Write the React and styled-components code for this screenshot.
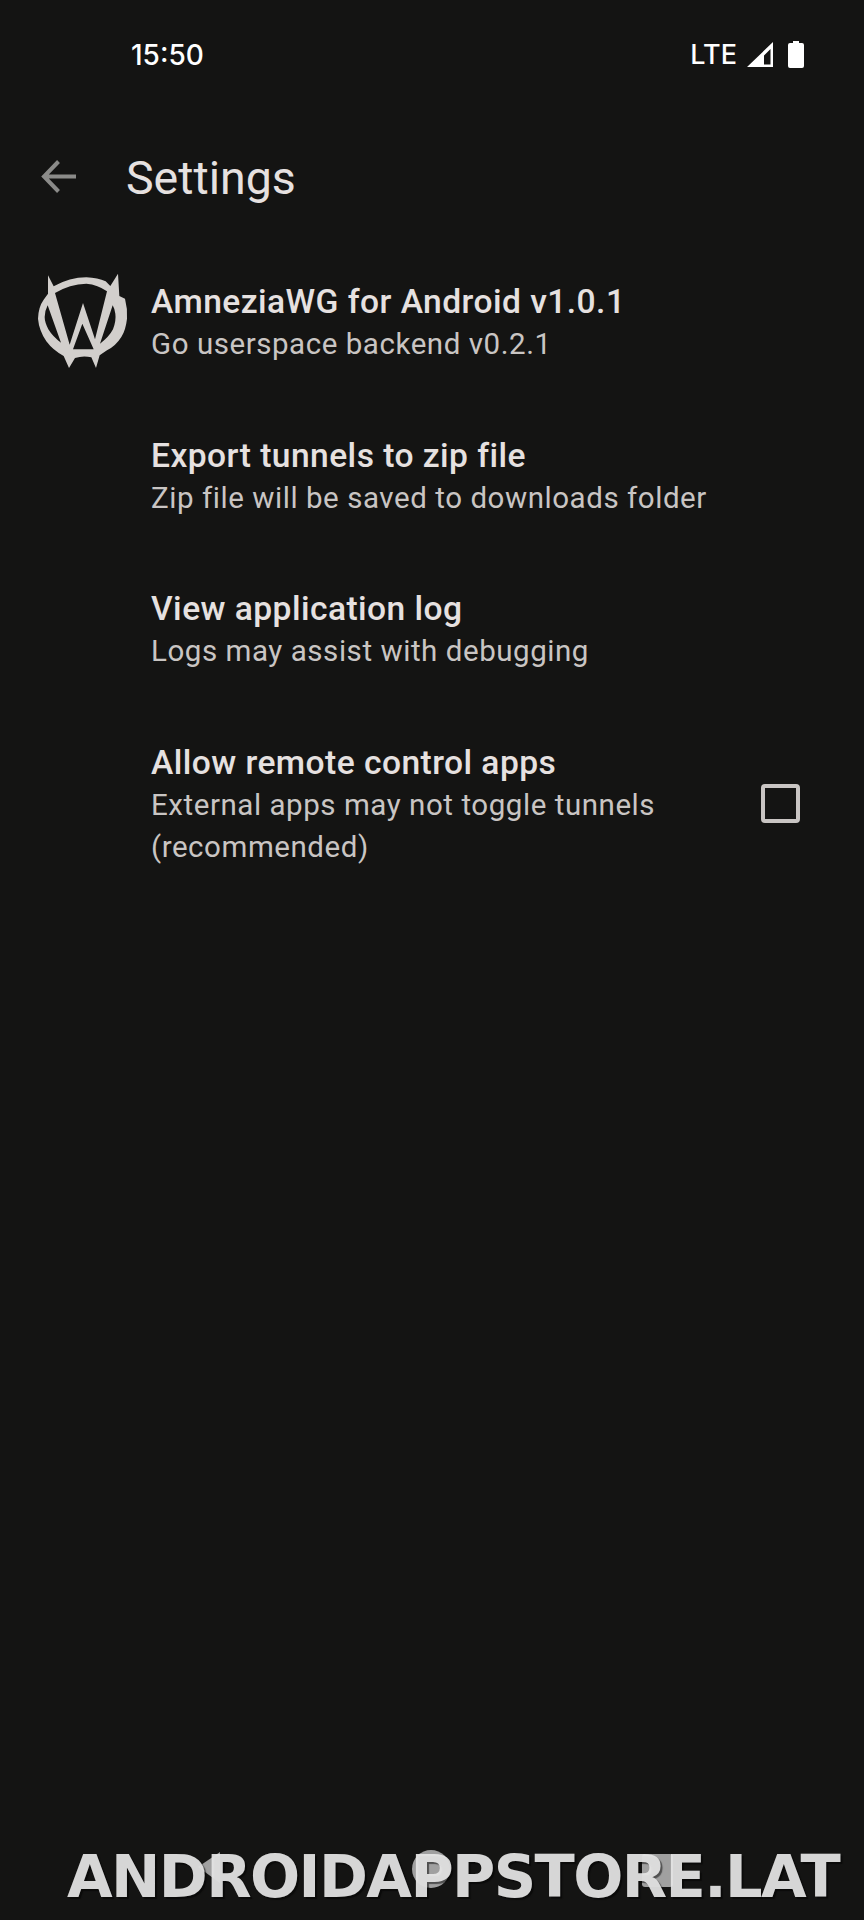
import React from 'react'
import styled, { createGlobalStyle } from 'styled-components'

const rows = [
  { title: 'AmneziaWG for Android v1.0.1', sub: 'Go userspace backend v0.2.1', logo: true },
  { title: 'Export tunnels to zip file', sub: 'Zip file will be saved to downloads folder' },
  { title: 'View application log', sub: 'Logs may assist with debugging' },
  { title: 'Allow remote control apps', sub: 'External apps may not toggle tunnels (recommended)', check: true },
]

const GlobalStyle = createGlobalStyle`
  html, body {
    margin: 0;
    padding: 0;
    background: #141413;
  }
`

const Screen = styled.div`
  position: relative;
  width: 864px;
  height: 1920px;
  overflow: hidden;
  background: #141413;
  font-family: Roboto, "Noto Sans", sans-serif;
`

const StatusBar = styled.div`
  height: 110px;
  box-sizing: border-box;
  padding: 0 60px 0 131px;
  display: flex;
  align-items: center;
  justify-content: space-between;
  color: #fff;
  font-family: Inter, Roboto, sans-serif;
  font-weight: 500;
  font-size: 28px;
`

const StatusIcons = styled.div`
  display: flex;
  align-items: center;
  gap: 10px;
  padding-bottom: 2px;
  font-size: 27px;

  svg:last-child {
    margin-left: 5px;
  }
`

const Toolbar = styled.div`
  height: 135px;
  display: flex;
  align-items: center;
  padding-left: 41px;
  gap: 50px;
`

const BackSlot = styled.div`
  display: flex;
  padding-bottom: 3px;
`

const Title = styled.div`
  font-size: 46.5px;
  line-height: 54px;
  color: #e6e1e0;
`

const Row = styled.div`
  display: flex;
  align-items: center;
  box-sizing: border-box;
  padding: 36px 64px 33.6px 0;
  min-height: 153.6px;
`

const IconSlot = styled.div`
  width: 151px;
  height: 0;
  flex: none;
  display: flex;
  align-items: center;
  padding: 0 0 4px 38px;
  box-sizing: border-box;
`

const RowText = styled.div`
  flex: 1;
  max-width: 570px;
`

const RowTitle = styled.div`
  font-size: 33.6px;
  line-height: 42px;
  font-weight: 500;
  letter-spacing: 0.45px;
  color: #e6e1e0;
`

const RowSub = styled.div`
  font-size: 29.5px;
  line-height: 42px;
  letter-spacing: 0.55px;
  color: #c9c5c3;
`

const CheckBox = styled.div`
  width: 39px;
  height: 39px;
  box-sizing: border-box;
  margin: 0 0 3px auto;
  border: 4px solid #c9c5c3;
  border-radius: 4px;
`

const NavIcons = styled.svg`
  position: absolute;
  left: 0;
  top: 1840px;
`

const Watermark = styled.div`
  position: absolute;
  left: 67px;
  top: 1842px;
  font-family: "DejaVu Sans", sans-serif;
  font-weight: 700;
  font-size: 59px;
  line-height: 70px;
  letter-spacing: -1.6px;
  white-space: nowrap;
  color: rgba(230, 230, 230, 0.93);
  text-shadow: 2px 2px 1px rgba(0, 0, 0, 0.5);
`

const Logo = () => (
  <svg width="90" height="98" viewBox="55 50 270 294">
    <path
      fill="#d2cfcc"
      fillRule="evenodd"
      d="M85 60 L102 93 Q150 66 200 66 Q235 68 258 78 L272 92 L295 55 L299 122 L316 130 Q324 160 322 190 Q318 225 305 245 Q288 272 262 285 L240 300 L229 338 L215 306 Q190 300 166 308 L148 338 L132 302 Q100 285 80 258 Q58 225 55 190 Q56 155 72 133 L85 115 Z
      M84 150 L124 262 Q100 245 86 222 Q75 200 75 185 Q76 165 84 150 Z
      M279 150 L241 265 Q268 245 280 222 Q290 195 287 175 Q285 160 279 150 Z
      M106 113 Q150 86 200 85 Q235 88 262 108 L226 252 L190 143 L150 268 Z
      M188 205 L222 282 L160 282 Z"
    />
  </svg>
)

const Signal = () => (
  <svg width="26" height="25" viewBox="0 0 26 25">
    <path fill="#fff" fillRule="evenodd" d="M26 0 V25 H0 Z M23.5 7 L17 13.5 V22.5 H23.5 Z" />
  </svg>
)

const Battery = () => (
  <svg width="16" height="27" viewBox="0 0 16 27">
    <path fill="#fff" d="M5 0 H11 V2 H14 Q16 2 16 4 V25 Q16 27 14 27 H2 Q0 27 0 25 V4 Q0 2 2 2 H5 Z" />
  </svg>
)

const BackArrow = () => (
  <svg width="35" height="33" viewBox="0 0 35 33">
    <path fill="none" stroke="#8b8b89" strokeWidth="4" d="M35 16.5 H3 M17.5 1.5 L3 16.5 L17.5 31.5" />
  </svg>
)

export default function App() {
  return (
    <Screen>
      <GlobalStyle />
      <StatusBar>
        <span>15:50</span>
        <StatusIcons>
          <span>LTE</span>
          <Signal />
          <Battery />
        </StatusIcons>
      </StatusBar>
      <Toolbar>
        <BackSlot><BackArrow /></BackSlot>
        <Title>Settings</Title>
      </Toolbar>
      {rows.map(r => (
        <Row key={r.title}>
          <IconSlot>{r.logo && <Logo />}</IconSlot>
          <RowText>
            <RowTitle>{r.title}</RowTitle>
            <RowSub>{r.sub}</RowSub>
          </RowText>
          {r.check && <CheckBox />}
        </Row>
      ))}
      <NavIcons width="864" height="60" viewBox="0 0 864 60">
        <path fill="#a0a0a0" d="M220 12 V43 L198 27 Z" />
        <circle cx="431" cy="29" r="19" fill="#a0a0a0" />
        <rect x="642" y="14" width="31" height="33" rx="3" fill="#a0a0a0" />
      </NavIcons>
      <Watermark>ANDROIDAPPSTORE.LAT</Watermark>
    </Screen>
  )
}
